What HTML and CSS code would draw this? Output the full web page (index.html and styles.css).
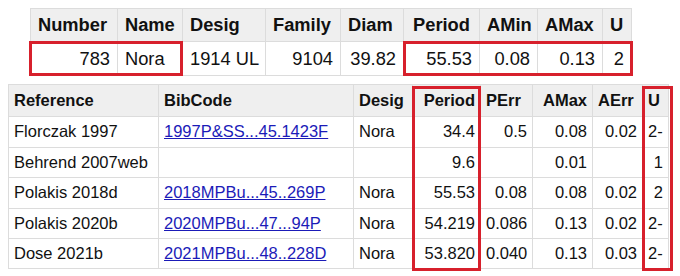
FILE: index.html
```html
<!DOCTYPE html>
<html>
<head>
<meta charset="utf-8">
<link rel="stylesheet" href="styles.css">
</head>
<body>
<div class="wrap wrap-top">
  <table class="tbl tbl-top">
    <colgroup>
      <col class="c87"><col class="c65"><col class="c83"><col class="c75"><col class="c63"><col class="c76"><col class="c58"><col class="c65"><col class="c29">
    </colgroup>
    <tr class="head">
      <th>Number</th><th>Name</th><th>Desig</th><th>Family</th><th>Diam</th><th class="ctr">Period</th><th>AMin</th><th>AMax</th><th>U</th>
    </tr>
    <tr>
      <td class="num">783</td><td>Nora</td><td>1914 UL</td><td class="num">9104</td><td class="num">39.82</td><td class="num">55.53</td><td class="num">0.08</td><td class="num">0.13</td><td class="num">2</td>
    </tr>
  </table>
  <div class="mark mark-a"></div>
  <div class="mark mark-b"></div>
</div>

<div class="wrap wrap-bottom">
  <table class="tbl tbl-bottom">
    <colgroup>
      <col class="c150"><col class="c195"><col class="c59"><col class="c68"><col class="c52"><col class="c60"><col class="c50"><col class="c26">
    </colgroup>
    <tr class="head">
      <th>Reference</th><th>BibCode</th><th>Desig</th><th class="rt">Period</th><th>PErr</th><th class="rt">AMax</th><th>AErr</th><th>U</th>
    </tr>
    <tr>
      <td>Florczak 1997</td><td><a href="#">1997P&amp;SS...45.1423F</a></td><td>Nora</td><td class="num">34.4</td><td class="num">0.5</td><td class="num">0.08</td><td class="num">0.02</td><td>2-</td>
    </tr>
    <tr>
      <td>Behrend 2007web</td><td></td><td></td><td class="num">9.6</td><td></td><td class="num">0.01</td><td></td><td class="num">1</td>
    </tr>
    <tr>
      <td>Polakis 2018d</td><td><a href="#">2018MPBu...45..269P</a></td><td>Nora</td><td class="num">55.53</td><td class="num">0.08</td><td class="num">0.08</td><td class="num">0.02</td><td class="num">2</td>
    </tr>
    <tr>
      <td>Polakis 2020b</td><td><a href="#">2020MPBu...47...94P</a></td><td>Nora</td><td class="num">54.219</td><td class="num">0.086</td><td class="num">0.13</td><td class="num">0.02</td><td>2-</td>
    </tr>
    <tr class="last">
      <td>Dose 2021b</td><td><a href="#">2021MPBu...48..228D</a></td><td>Nora</td><td class="num">53.820</td><td class="num">0.040</td><td class="num">0.13</td><td class="num">0.03</td><td>2-</td>
    </tr>
  </table>
  <div class="mark mark-c"></div>
  <div class="mark mark-d"></div>
</div>
</body>
</html>
```

FILE: styles.css
```css
html, body {
  margin: 0;
  padding: 0;
  background: #ffffff;
}

body {
  padding: 8px;
  font-family: "Liberation Sans", Arial, sans-serif;
  color: #111111;
}

.wrap {
  position: relative;
  width: fit-content;
}

.wrap-top {
  margin-left: 22px;
}

.wrap-bottom {
  margin-top: 8px;
}

.tbl {
  border-collapse: collapse;
  table-layout: fixed;
}

.tbl th,
.tbl td {
  border: 1px solid #dcdcdc;
  padding: 0 6px;
  white-space: nowrap;
  overflow: hidden;
  text-align: left;
  vertical-align: middle;
}

.tbl th {
  background: #efefef;
  font-weight: bold;
  color: #111111;
}

.tbl td.num,
.tbl th.rt {
  text-align: right;
}

.tbl th.ctr {
  text-align: center;
}

.tbl-top {
  font-size: 18.3px;
  width: 601px;
}

.tbl-top th {
  height: 32px;
  padding: 0 7px;
}

.tbl-top td {
  height: 33px;
  padding: 0 7px;
}

.tbl-bottom {
  font-size: 16.5px;
  width: 660px;
}

.tbl-bottom th {
  height: 31px;
  padding: 0 5px;
}

.tbl-bottom td {
  height: 29.5px;
  padding: 0 5px;
}

.tbl-bottom .last td {
  height: 29px;
}

.tbl a {
  color: #1b1bb8;
  text-decoration: underline;
}

.c87 { width: 87px; }
.c65 { width: 65px; }
.c83 { width: 83px; }
.c75 { width: 75px; }
.c63 { width: 63px; }
.c76 { width: 76px; }
.c58 { width: 58px; }
.c29 { width: 29px; }
.c150 { width: 150px; }
.c195 { width: 195px; }
.c59 { width: 59px; }
.c68 { width: 68px; }
.c52 { width: 52px; }
.c60 { width: 60px; }
.c50 { width: 50px; }
.c26 { width: 26px; }

.mark {
  position: absolute;
  box-sizing: border-box;
  border: 3px solid #d7202c;
  pointer-events: none;
}

.mark-a {
  left: -1px;
  top: 33px;
  width: 154px;
  height: 35px;
}

.mark-b {
  left: 373px;
  top: 33px;
  width: 230px;
  height: 35px;
}

.mark-c {
  left: 404px;
  top: 2px;
  width: 69px;
  height: 185px;
}

.mark-d {
  left: 634px;
  top: 2px;
  width: 31px;
  height: 185px;
}
```
